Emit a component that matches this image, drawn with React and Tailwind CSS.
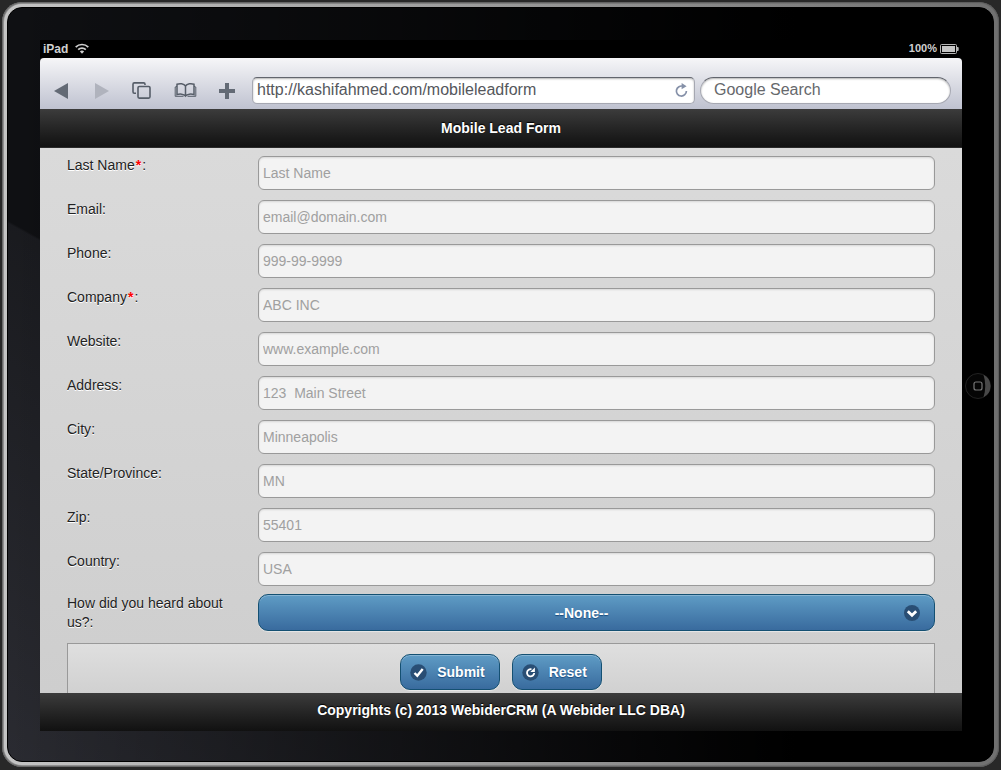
import React from "react";

const fields = [
  { id: "lastName", label: "Last Name", required: true, placeholder: "Last Name" },
  { id: "email", label: "Email", placeholder: "email@domain.com", type: "email" },
  { id: "phone", label: "Phone", placeholder: "999-99-9999", type: "tel" },
  { id: "company", label: "Company", required: true, placeholder: "ABC INC" },
  { id: "website", label: "Website", placeholder: "www.example.com" },
  { id: "address", label: "Address", placeholder: "123  Main Street" },
  { id: "city", label: "City", placeholder: "Minneapolis" },
  { id: "state", label: "State/Province", placeholder: "MN" },
  { id: "zip", label: "Zip", placeholder: "55401" },
  { id: "country", label: "Country", placeholder: "USA" },
];

const blue =
  "border border-[#145072] bg-linear-to-b from-[#5f9cc5] to-[#396b9e] font-bold text-white shadow-[inset_0_1px_0_rgba(255,255,255,0.25),0_1px_1px_rgba(255,255,255,0.5)] [text-shadow:0_1px_1px_#194b7e]";

function StatusBar() {
  return (
    <div className="flex h-[18px] shrink-0 items-center justify-between bg-black px-[3px] pb-px text-[#d0d0d0]">
      <div className="flex items-center gap-[7px] text-xs font-bold">
        <span>iPad</span>
        <svg width="14" height="11" viewBox="0 0 14 11" fill="none" stroke="currentColor" strokeWidth="1.7">
          <path d="M.7 4.2C4.2.6 9.8.6 13.3 4.2" />
          <path d="M3.2 6.700c2.100-2.100 5.500-2.100 7.600 0" />
          <path d="M4.900 8.400c1.200-1.100 3-1.100 4.200 0L7 10.700z" fill="currentColor" stroke="none" />
        </svg>
      </div>
      <div className="flex items-center gap-[3px] text-[11px] font-bold">
        <span>100%</span>
        <svg width="19" height="10" viewBox="0 0 19 10">
          <rect x=".5" y=".5" width="16" height="9" rx="1" fill="none" stroke="#b5b5b5" />
          <rect x="2" y="2" width="13" height="6" fill="#c4c4c4" />
          <path d="M17 3h.8q.9 0 .9 1v2q0 1-.9 1H17z" fill="#b5b5b5" />
        </svg>
      </div>
    </div>
  );
}

function BrowserBar() {
  return (
    <div className="flex h-[51px] shrink-0 items-end rounded-t-[4px] bg-linear-to-b from-[#f6f6f8] to-[#bfc2d0] pr-[11px] pb-[5px] pl-[13px] text-[#636a75]">
      <div className="flex h-[27px] w-[199px] shrink-0 items-center">
        <button type="button" aria-label="Back" className="w-[40px]">
          <svg width="16" height="16" viewBox="0 0 16 16">
            <path d="M15 0v16L1 8z" fill="#636a75" />
          </svg>
        </button>
        <button type="button" aria-label="Forward" className="w-[39px]">
          <svg width="16" height="16" viewBox="0 0 16 16">
            <path d="M2 0v16l14-8z" fill="#b0b3bd" />
          </svg>
        </button>
        <button type="button" aria-label="Pages" className="w-[42px]">
          <svg width="19" height="17" viewBox="0 0 19 17" fill="none" stroke="#565d68" strokeWidth="1.600">
            <path d="M4 11.200H2.300Q1 11.200 1 9.800V2.200Q1 .9 2.300.9h9.400Q13 .9 13 2.300V3" />
            <rect x="6" y="4.500" width="12" height="11.600" rx="1.300" />
          </svg>
        </button>
        <button type="button" aria-label="Bookmarks" className="w-[43px]">
          <svg width="23" height="17" viewBox="0 0 23 17" fill="none" stroke="#565d68" strokeWidth="1.500">
            <path d="M11.500 4C10 1.500 5.500 1.200 3 2.300V12.600c2.600-.9 6.800-.8 8.500 1.400 1.700-2.200 5.900-2.300 8.500-1.400V2.300C17.500 1.200 13 1.500 11.500 4zv10" />
            <path d="M3 4.300L1.200 5v9.300H9.500M20 4.300l1.800.7v9.300h-8.300" strokeWidth="1" />
          </svg>
        </button>
        <button type="button" aria-label="Add" className="w-[20px]">
          <svg width="18" height="16" viewBox="0 0 18 16">
            <path d="M8 0h4v6h6v4h-6v6H8v-6H2V6h6z" fill="#636a75" />
          </svg>
        </button>
      </div>
      <div className="flex h-[27px] min-w-0 flex-1 items-center rounded-[5px] border border-[#a6a8b2] border-t-[#62656d] bg-white pr-[6px] pb-px pl-[4px] shadow-[inset_0_1px_2px_rgba(0,0,0,0.3)]">
        <input
          aria-label="Address bar"
          defaultValue="http://kashifahmed.com/mobileleadform"
          className="min-w-0 flex-1 bg-transparent text-base text-[#55575c] outline-none"
        />
        <button type="button" aria-label="Reload">
          <svg width="13" height="15" viewBox="0 0 13 15" fill="none" stroke="#8590a8" strokeWidth="1.700">
            <path d="M8 3.300A5 5 0 1 0 11.400 8" />
            <path d="M6.600 0v6.200L11.600 3.200z" fill="#8590a8" stroke="none" />
          </svg>
        </button>
      </div>
      <input
        aria-label="Google Search"
        placeholder="Google Search"
        className="ml-[5px] h-[27px] w-[251px] shrink-0 rounded-full border border-[#a6a8b2] border-t-[#62656d] bg-white px-[13px] pb-px text-base shadow-[inset_0_1px_2px_rgba(0,0,0,0.3)] outline-none placeholder:text-[#66686c]"
      />
    </div>
  );
}

function LeadForm() {
  return (
    <form
      className="min-h-0 flex-1 overflow-hidden bg-linear-to-b from-[#dadada] to-[#cecece] px-[27px] pt-2 text-sm text-[#222]"
      onSubmit={(e) => e.preventDefault()}
    >
      <div className="flex flex-col gap-[10px]">
        {fields.map((f) => (
          <div key={f.id} className="flex items-start">
            <label htmlFor={f.id} className="w-[191px] shrink-0 leading-[19px] [text-shadow:0_1px_0_#fff]">
              {f.label}
              {f.required && <span className="px-px font-bold text-[#f00]">*</span>}:
            </label>
            <input
              id={f.id}
              type={f.type || "text"}
              placeholder={f.placeholder}
              className="h-[34px] min-w-0 flex-1 rounded-[6px] border border-[#999] bg-[#f3f3f3] px-1 shadow-[inset_0_1px_2px_rgba(0,0,0,0.12)] outline-none placeholder:text-[#a0a0a0]"
            />
          </div>
        ))}
      </div>
      <div className="mt-2 flex items-start">
        <label htmlFor="source" className="w-[191px] shrink-0 pr-5 leading-[19px] [text-shadow:0_1px_0_#fff]">
          How did you heard about us?:
        </label>
        <div className="relative flex min-w-0 flex-1">
          <select
            id="source"
            className={"h-[37px] w-full appearance-none rounded-[10px] pr-[46px] pl-4 [text-align-last:center] " + blue}
          >
            <option>--None--</option>
          </select>
          <svg className="pointer-events-none absolute top-[11px] right-[15px]" width="16" height="16" viewBox="0 0 16 16">
            <circle cx="8" cy="8" r="8" fill="#294e74" />
            <path d="M3.800 6.300l4.200 4 4.200-4" fill="none" stroke="#fff" strokeWidth="2.800" />
          </svg>
        </div>
      </div>
      <div className="mt-[11px] flex h-[80px] items-start justify-center gap-3 border border-[#999] bg-linear-to-b from-[#dfdfdf] to-[#c8c8c8] pt-[10px]">
        <button type="submit" className={"flex h-9 items-center gap-[10px] rounded-[10px] pr-[14px] pl-[9px] " + blue}>
          <svg width="17" height="17" viewBox="0 0 17 17">
            <circle cx="8.500" cy="8.500" r="8.200" fill="#294e74" />
            <path d="M4.500 9l2.800 2.800L12.700 5" fill="none" stroke="#fff" strokeWidth="2.400" />
          </svg>
          Submit
        </button>
        <button type="reset" className={"flex h-9 items-center gap-[10px] rounded-[10px] pr-[14px] pl-[9px] " + blue}>
          <svg width="17" height="17" viewBox="0 0 17 17">
            <circle cx="8.500" cy="8.500" r="8.200" fill="#294e74" />
            <path d="M9.500 5.300A3.600 3.600 0 1 0 12.200 9" fill="none" stroke="#fff" strokeWidth="1.800" />
            <path d="M12.900 3.500v4.600H8.300z" fill="#fff" />
          </svg>
          Reset
        </button>
      </div>
    </form>
  );
}

export default function App() {
  return (
    <div className="flex h-screen bg-[#282828] px-[2px] pt-[2px] pb-[3px] font-['Liberation_Sans',Arial,sans-serif]">
      <div className="flex min-w-0 flex-1 rounded-[20px] bg-linear-to-r from-[#a4a4a4] to-[#777] p-[2px] shadow-[inset_0_0_2px_1px_#555]">
        <div className="flex min-w-0 flex-1 rounded-[18px] bg-linear-to-r from-[#c4c4c4] to-[#707070] p-[3px]">
          <div className="flex min-w-0 flex-1 rounded-[15px] border border-black bg-[#0f1013] bg-[linear-gradient(90deg,transparent,#000_80%),linear-gradient(209deg,transparent_58.4%,rgba(225,225,255,0.05)_58.6%,rgba(225,225,255,0.13)_100%)] pt-8 pb-[30px] pl-8">
            <main className="flex min-w-0 flex-1 flex-col">
              <StatusBar />
              <BrowserBar />
              <h1 className="flex h-[39px] shrink-0 items-center justify-center border-b border-[#2a2a2a] bg-linear-to-b from-[#3c3c3c] to-[#111] text-sm font-bold text-white [text-shadow:0_-1px_1px_#000]">
                Mobile Lead Form
              </h1>
              <LeadForm />
              <footer className="flex h-[38px] shrink-0 items-center justify-center bg-linear-to-b from-[#3c3c3c] to-[#111] pb-1 text-sm font-bold text-white [text-shadow:0_-1px_1px_#000]">
                Copyrights (c) 2013 WebiderCRM (A Webider LLC DBA)
              </footer>
            </main>
            <div className="flex w-[31px] shrink-0 items-center justify-center">
              <button type="button" aria-label="Home">
                <svg width="26" height="26" viewBox="0 0 26 26">
                  <circle cx="13" cy="13" r="12.500" fill="#050505" stroke="#222" />
                  <path d="M18.500 1.800A12.500 12.500 0 0 1 18.500 24.200Q22 13 18.500 1.800z" fill="#484848" />
                  <rect x="9" y="9" width="8" height="8" rx="2" fill="none" stroke="#777" strokeWidth="1.200" />
                </svg>
              </button>
            </div>
          </div>
        </div>
      </div>
    </div>
  );
}
